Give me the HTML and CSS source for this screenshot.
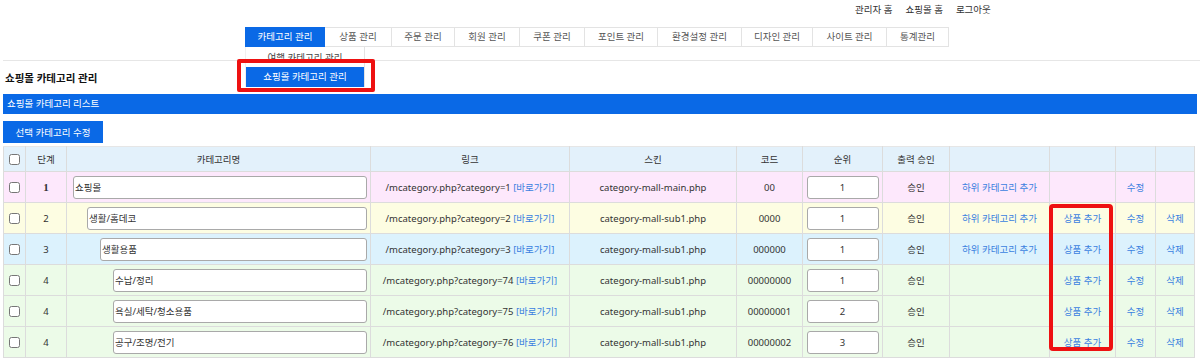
FILE: index.html
```html
<!doctype html>
<html>
    <head>
        <title>쇼핑몰 카테고리 관리</title>
        <link rel="stylesheet" href="styles.css">
    </head>
    <body>
        <div class="top-links">
            <a href="#">관리자 홈</a>
            <a href="#">쇼핑몰 홈</a>
            <a href="#">로그아웃</a>
        </div>

        <div class="menu-area">
            <ul class="gnb">
                <li class="on">
                    카테고리 관리
                    <div class="sub-menu">
                        <div class="sub-item first">여행 카테고리 관리</div>
                        <div class="sub-item active">쇼핑몰 카테고리 관리</div>
                        <div class="mark mark-sub"></div>
                    </div>
                </li>
                <li>상품 관리</li>
                <li>주문 관리</li>
                <li>회원 관리</li>
                <li>쿠폰 관리</li>
                <li>포인트 관리</li>
                <li>환경설정 관리</li>
                <li>디자인 관리</li>
                <li>사이트 관리</li>
                <li>통계관리</li>
            </ul>
        </div>

        <div class="content">
            <h2 class="page-title">쇼핑몰 카테고리 관리</h2>
            <div class="bar">쇼핑몰 카테고리 리스트</div>
            <button class="btn">선택 카테고리 수정</button>

            <div class="table-wrap">
                <table class="cate-table">
                    <colgroup>
                        <col style="width:22px"><col style="width:41px"><col style="width:304px">
                        <col style="width:199px"><col style="width:167px"><col style="width:66px">
                        <col style="width:80px"><col style="width:67px"><col style="width:100px">
                        <col style="width:66px"><col style="width:40px"><col style="width:39px">
                    </colgroup>
                    <thead>
                        <tr>
                            <th><input type="checkbox"></th>
                            <th>단계</th>
                            <th>카테고리명</th>
                            <th>링크</th>
                            <th>스킨</th>
                            <th>코드</th>
                            <th>순위</th>
                            <th>출력 승인</th>
                            <th></th>
                            <th></th>
                            <th></th>
                            <th></th>
                        </tr>
                    </thead>
                    <tbody>
                        <tr class="lv1">
                            <td><input type="checkbox"></td>
                            <td class="serif">1</td>
                            <td><div class="name lv-pad1"><input class="txt" value="쇼핑몰"></div></td>
                            <td>/mcategory.php?category=1 <a href="#">[바로가기]</a></td>
                            <td>category-mall-main.php</td>
                            <td>00</td>
                            <td><input class="rank" value="1"></td>
                            <td>승인</td>
                            <td><a href="#">하위 카테고리 추가</a></td>
                            <td></td>
                            <td><a href="#">수정</a></td>
                            <td></td>
                        </tr>
                        <tr class="lv2">
                            <td><input type="checkbox"></td>
                            <td>2</td>
                            <td><div class="name lv-pad2"><input class="txt" value="생활/홈데코"></div></td>
                            <td>/mcategory.php?category=2 <a href="#">[바로가기]</a></td>
                            <td>category-mall-sub1.php</td>
                            <td>0000</td>
                            <td><input class="rank" value="1"></td>
                            <td>승인</td>
                            <td><a href="#">하위 카테고리 추가</a></td>
                            <td><a href="#">상품 추가</a></td>
                            <td><a href="#">수정</a></td>
                            <td><a href="#">삭제</a></td>
                        </tr>
                        <tr class="lv3">
                            <td><input type="checkbox"></td>
                            <td>3</td>
                            <td><div class="name lv-pad3"><input class="txt" value="생활용품"></div></td>
                            <td>/mcategory.php?category=3 <a href="#">[바로가기]</a></td>
                            <td>category-mall-sub1.php</td>
                            <td>000000</td>
                            <td><input class="rank" value="1"></td>
                            <td>승인</td>
                            <td><a href="#">하위 카테고리 추가</a></td>
                            <td><a href="#">상품 추가</a></td>
                            <td><a href="#">수정</a></td>
                            <td><a href="#">삭제</a></td>
                        </tr>
                        <tr class="lv4">
                            <td><input type="checkbox"></td>
                            <td>4</td>
                            <td><div class="name lv-pad4"><input class="txt" value="수납/정리"></div></td>
                            <td>/mcategory.php?category=74 <a href="#">[바로가기]</a></td>
                            <td>category-mall-sub1.php</td>
                            <td>00000000</td>
                            <td><input class="rank" value="1"></td>
                            <td>승인</td>
                            <td></td>
                            <td><a href="#">상품 추가</a></td>
                            <td><a href="#">수정</a></td>
                            <td><a href="#">삭제</a></td>
                        </tr>
                        <tr class="lv4">
                            <td><input type="checkbox"></td>
                            <td>4</td>
                            <td><div class="name lv-pad4"><input class="txt" value="욕실/세탁/청소용품"></div></td>
                            <td>/mcategory.php?category=75 <a href="#">[바로가기]</a></td>
                            <td>category-mall-sub1.php</td>
                            <td>00000001</td>
                            <td><input class="rank" value="2"></td>
                            <td>승인</td>
                            <td></td>
                            <td><a href="#">상품 추가</a></td>
                            <td><a href="#">수정</a></td>
                            <td><a href="#">삭제</a></td>
                        </tr>
                        <tr class="lv4">
                            <td><input type="checkbox"></td>
                            <td>4</td>
                            <td><div class="name lv-pad4"><input class="txt" value="공구/조명/전기"></div></td>
                            <td>/mcategory.php?category=76 <a href="#">[바로가기]</a></td>
                            <td>category-mall-sub1.php</td>
                            <td>00000002</td>
                            <td><input class="rank" value="3"></td>
                            <td>승인</td>
                            <td></td>
                            <td><a href="#">상품 추가</a></td>
                            <td><a href="#">수정</a></td>
                            <td><a href="#">삭제</a></td>
                        </tr>
                    </tbody>
                </table>
                <!-- highlight round the 상품 추가 column -->
                <div class="mark mark-col"></div>
            </div>
        </div>
    </body>
</html>
```

FILE: styles.css
```css
body{
    margin: 0;
    width: 1200px;
    color: #333;
    font-family: 'Noto Sans', 'Noto Sans CJK KR', sans-serif;
    font-size: 9.5px;
    background: #fff;
}
a{
    color: #3a7fe0;
    text-decoration: none;
}

/* TOP LINKS */
.top-links{
    display: flex;
    gap: 13px;
    height: 18px;
    padding: 0 0 0 855px;
    align-items: center;
}
.top-links a{
    color: #333;
}

/* MENU */
.menu-area{
    margin: 9px 0 0 3px;
    padding-bottom: 13px;
    border-bottom: 1px solid #e6e6e6;
}
.gnb{
    display: flex;
    margin: 0 0 0 242px;
    padding: 0;
    list-style: none;
}
.gnb li{
    position: relative;
    box-sizing: border-box;
    height: 20px;
    line-height: 18px;
    text-align: center;
    border: 1px solid #e3e3e3;
    border-left: none;
    color: #555;
    white-space: nowrap;
}
.gnb li:first-child{
    border-left: 1px solid #e3e3e3;
}
.gnb li.on{
    background: #0a69e6;
    border-color: #0a69e6;
    color: #fff;
    width: 80px;
}
.gnb li:nth-child(2){ width: 67px; }
.gnb li:nth-child(3){ width: 63px; }
.gnb li:nth-child(4){ width: 65px; }
.gnb li:nth-child(5){ width: 65px; }
.gnb li:nth-child(6){ width: 73px; }
.gnb li:nth-child(7){ width: 84px; }
.gnb li:nth-child(8){ width: 71px; }
.gnb li:nth-child(9){ width: 74px; }
.gnb li:nth-child(10){ width: 62px; }

.sub-menu{
    position: absolute;
    top: 19px;
    left: -1px;
    width: 118px;
    background: #fff;
    border-right: 1px solid #e3e3e3;
    border-left: 1px solid #f0f0f0;
    z-index: 2;
}
.sub-item{
    height: 20px;
    line-height: 19px;
    text-align: center;
    color: #444;
}
.sub-item.first{
    line-height: 22px;
}
.sub-item.active{
    background: #0a69e6;
    color: #fff;
}

/* RED MARKS */
.mark{
    position: absolute;
    border: 4px solid #ee1111;
    border-radius: 2px;
    z-index: 3;
}
.mark-sub{
    top: 12px;
    left: -9px;
    width: 130px;
    height: 25px;
}
.mark-col{
    top: 58px;
    left: 1046px;
    width: 56px;
    height: 139px;
    border-radius: 4px;
}

/* CONTENT */
.content{
    padding: 0 3px;
}
.page-title{
    margin: 0;
    height: 33px;
    line-height: 35px;
    padding-left: 2px;
    font-size: 10.5px;
    font-weight: bold;
    color: #111;
}
.bar{
    height: 20px;
    line-height: 20px;
    padding-left: 4px;
    background: #0a69e6;
    color: #fff;
}
.btn{
    display: block;
    margin-top: 7px;
    width: 100px;
    height: 22px;
    border: none;
    background: #0a69e6;
    color: #fff;
    font-family: inherit;
    font-size: 9.5px;
}

/* TABLE */
.table-wrap{
    position: relative;
    margin-top: 3px;
    width: 1191px;
}
.cate-table{
    width: 1191px;
    table-layout: fixed;
    border-collapse: collapse;
}
.cate-table th,
.cate-table td{
    border: 1px solid #dcdcdc;
    border-top-color: #e6e6e6;
    text-align: center;
    white-space: nowrap;
    padding: 0;
}
.cate-table th{
    height: 24px;
    background: #e3f1fb;
    font-weight: normal;
    color: #333;
}
.cate-table td{
    height: 30px;
}
.cate-table input[type=checkbox]{
    width: 11px;
    height: 11px;
    margin: 0;
    vertical-align: middle;
}
.lv1 td{ background: #fde8fc; }
.lv2 td{ background: #fdfde2; }
.lv3 td{ background: #dcf2fd; }
.lv4 td{ background: #ecfbe8; }

.serif{
    font-family: 'Liberation Serif', serif;
    font-weight: bold;
    font-size: 11px;
}

.name{
    display: flex;
    padding-right: 3px;
}
.lv-pad1{ padding-left: 6px; }
.lv-pad2{ padding-left: 20px; }
.lv-pad3{ padding-left: 33px; }
.lv-pad4{ padding-left: 46px; }

.txt,
.rank{
    box-sizing: border-box;
    height: 23px;
    border: 1px solid #a9a9a9;
    border-radius: 3px;
    font-family: inherit;
    font-size: 9.5px;
    color: #333;
    background: #fff;
}
.txt{
    flex: 1;
    padding: 0 1px;
}
.rank{
    width: 72px;
    text-align: center;
}
```
